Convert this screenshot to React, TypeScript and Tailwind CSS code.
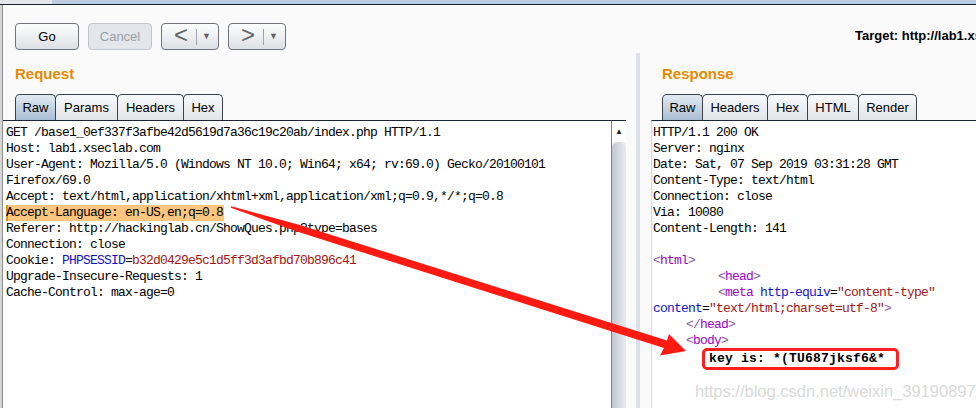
import React from "react";

const mono = { fontFamily: '"Liberation Mono", "DejaVu Sans Mono", monospace' };

function Btn({ children, disabled, w }: { children: React.ReactNode; disabled?: boolean; w: string }) {
  return (
    <div
      className={
        "h-[27px] rounded-[4px] border flex items-center justify-center text-[13px] " +
        w +
        " " +
        (disabled
          ? "border-[#c3c7cd] bg-[#e3e6ea] text-[#9a9ea4]"
          : "border-[#707478] bg-linear-to-b from-[#fefefe] to-[#dde0e4] text-black")
      }
    >
      {children}
    </div>
  );
}

function NavBtn({ glyph }: { glyph: string }) {
  return (
    <div className="w-[58px] h-[27px] rounded-[4px] border border-[#707478] bg-linear-to-b from-[#fefefe] to-[#dde0e4] flex items-center pl-[12px]">
      <span className="text-[24px] leading-none text-[#606468] w-[18px] -mt-[3px]">{glyph}</span>
      <span className="w-px h-[16px] bg-[#a0a4a8] ml-[4px]" />
      <span className="text-[9px] text-[#606468] ml-[5px]">▼</span>
    </div>
  );
}

function Tab({ label, w, active, first }: { label: string; w: string; active?: boolean; first?: boolean }) {
  return (
    <div
      className={
        "h-[26px] border border-b-0 border-[#3c4048] rounded-t-[5px] flex items-center justify-center text-[13px] text-black " +
        w +
        " " +
        (first ? "" : "-ml-px ") +
        (active ? "bg-linear-to-b from-[#e2eaf2] to-[#a9bed3]" : "bg-linear-to-b from-[#f8f9fb] to-[#e2e4e9]")
      }
    >
      {label}
    </div>
  );
}

function Line({ children, className = "" }: { children?: React.ReactNode; className?: string }) {
  return <div className={"h-[16px] leading-[16px] whitespace-pre " + className}>{children}</div>;
}

const B = ({ c }: { c: string }) => <span className="text-[#8a58a0]">{c}</span>;
const T = ({ c }: { c: string }) => <span className="text-[#a000c8]">{c}</span>;
const A = ({ c }: { c: string }) => <span className="text-[#1414c8]">{c}</span>;
const V = ({ c }: { c: string }) => <span className="text-[#a31515]">{c}</span>;

export default function App() {
  return (
    <div
      className="w-[976px] h-[408px] relative overflow-hidden bg-[#fafafa] flex flex-col"
      style={{ fontFamily: '"Liberation Sans", Arial, sans-serif' }}
    >
      {/* top strip */}
      <div className="h-[5px] shrink-0 flex">
        <div className="w-[52px] h-[4px] bg-[#e4e6ea]" />
        <div className="flex-1 h-[4px] bg-[#bccde2]" />
      </div>
      <div className="h-px bg-[#1a2232] -mt-px shrink-0" />

      <div className="flex flex-1 min-h-0">
        {/* left window edge */}
        <div className="w-[3px] shrink-0 bg-[#d6d6d6] border-r border-[#8e8e8e]" />

        <div className="flex-1 flex flex-col min-w-0">
          {/* header row */}
          <div className="h-[45px] shrink-0 flex items-end pl-[12px]">
            <div className="flex gap-[9px]">
              <Btn w="w-[64px]">Go</Btn>
              <Btn w="w-[64px]" disabled>
                Cancel
              </Btn>
              <NavBtn glyph="<" />
              <NavBtn glyph=">" />
            </div>
            <div className="ml-auto w-[121px] overflow-hidden whitespace-nowrap text-[13px] font-bold text-black self-start mt-[21px]">
              Target: http://lab1.xseclab.com
            </div>
          </div>

          {/* panes */}
          <div className="flex flex-1 min-h-0">
            {/* request */}
            <div className="w-[623px] shrink-0 flex flex-col">
              <div className="pl-[12px] pt-[15px] h-[34px] text-[15px] font-bold text-[#e88a00] leading-[18px]">Request</div>
              <div className="pl-[12px] mt-[10px] flex items-end">
                <Tab label="Raw" w="w-[41px]" active first />
                <Tab label="Params" w="w-[63px]" />
                <Tab label="Headers" w="w-[67px]" />
                <Tab label="Hex" w="w-[40px]" />
              </div>
              <div className="flex-1 flex border-t border-[#1c2636] bg-white min-h-0">
                <div className="flex-1 pl-[3px] pt-[4px] text-[13px] tracking-[-0.8px] text-black" style={mono}>
                  <Line>GET /base1_0ef337f3afbe42d5619d7a36c19c20ab/index.php HTTP/1.1</Line>
                  <Line>Host: lab1.xseclab.com</Line>
                  <Line>User-Agent: Mozilla/5.0 (Windows NT 10.0; Win64; x64; rv:69.0) Gecko/20100101</Line>
                  <Line>Firefox/69.0</Line>
                  <Line>Accept: text/html,application/xhtml+xml,application/xml;q=0.9,*/*;q=0.8</Line>
                  <Line>
                    <span className="bg-[#fdc57e] shadow-[inset_2px_0_0_#e0901c] inline-block h-[16px] pr-[1px]">Accept-Language: en-US,en;q=0.8</span>
                  </Line>
                  <Line>Referer: http://hackinglab.cn/ShowQues.php?type=bases</Line>
                  <Line>Connection: close</Line>
                  <Line>
                    Cookie: <span className="text-[#1010c8]">PHPSESSID</span>=
                    <span className="text-[#a31515]">b32d0429e5c1d5ff3d3afbd70b896c41</span>
                  </Line>
                  <Line>Upgrade-Insecure-Requests: 1</Line>
                  <Line>Cache-Control: max-age=0</Line>
                </div>
                {/* scrollbar */}
                <div className="w-[15px] shrink-0 border-l border-[#7c7f86] flex flex-col bg-[#f0f1f4]">
                  <div className="h-[21px] flex items-center justify-center text-[8px] text-[#202020] bg-white">▲</div>
                  <div className="flex-1 rounded-t-[6px] bg-linear-to-r from-[#c2c5cc] via-[#d6d9df] to-[#e9ebef]" />
                </div>
              </div>
            </div>

            <div className="w-[10px] shrink-0" />
            {/* divider */}
            <div className="w-[4px] shrink-0 mt-[3px] bg-[#dcdfe7]" />

            {/* response */}
            <div className="flex-1 flex flex-col min-w-0">
              <div className="pl-[22px] pt-[15px] h-[34px] text-[15px] font-bold text-[#e88a00] leading-[18px]">Response</div>
              <div className="pl-[22px] mt-[10px] flex items-end">
                <Tab label="Raw" w="w-[41px]" active first />
                <Tab label="Headers" w="w-[66px]" />
                <Tab label="Hex" w="w-[41px]" />
                <Tab label="HTML" w="w-[52px]" />
                <Tab label="Render" w="w-[59px]" />
              </div>
              <div className="ml-[11px] flex-1 border-t border-[#1c2636] border-l border-l-[#d4d6da] bg-white pl-[1px] pt-[4px] text-[13px] tracking-[-0.8px] text-black" style={mono}>
                <Line>HTTP/1.1 200 OK</Line>
                <Line>Server: nginx</Line>
                <Line>Date: Sat, 07 Sep 2019 03:31:28 GMT</Line>
                <Line>Content-Type: text/html</Line>
                <Line>Connection: close</Line>
                <Line>Via: 10080</Line>
                <Line>Content-Length: 141</Line>
                <Line />
                <Line>
                  <B c="<" />
                  <T c="html" />
                  <B c=">" />
                </Line>
                <Line className="pl-[65px]">
                  <B c="<" />
                  <T c="head" />
                  <B c=">" />
                </Line>
                <Line className="pl-[65px]">
                  <B c="<" />
                  <T c="meta" /> <A c="http-equiv" />=<V c={'"content-type"'} />
                </Line>
                <Line>
                  <A c="content" />=<V c={'"text/html;charset=utf-8"'} />
                  <B c=">" />
                </Line>
                <Line className="pl-[33px]">
                  <B c="</" />
                  <T c="head" />
                  <B c=">" />
                </Line>
                <Line className="pl-[33px]">
                  <B c="<" />
                  <T c="body" />
                  <B c=">" />
                </Line>
                <div className="pl-[49px] h-[22px] -mt-[1px]">
                  <div className="inline-flex items-center h-[22px] w-[197px] border-[3px] border-[#ff1f1f] rounded-[5px] pl-[4px] font-bold tracking-[0.2px] text-[13px] text-black">
                    key is: *(TU687jksf6&amp;*
                  </div>
                </div>
              </div>
            </div>
          </div>
        </div>
      </div>

      {/* red annotation arrow */}
      <svg className="absolute inset-0 pointer-events-none" width="976" height="408" viewBox="0 0 976 408">
        <polygon
          points="230.8,207.8 297,231.6 664,348 660,355.5 686,351 669,334 667,340.5 299,224.8 231.2,206.2"
          fill="#ff1a12"
        />
      </svg>

      {/* watermark */}
      <div className="absolute left-[695px] top-[379px] text-[16.5px] text-[#d9d9d9] whitespace-nowrap pointer-events-none">
        https://blog.csdn.net/weixin_39190897
      </div>
    </div>
  );
}
